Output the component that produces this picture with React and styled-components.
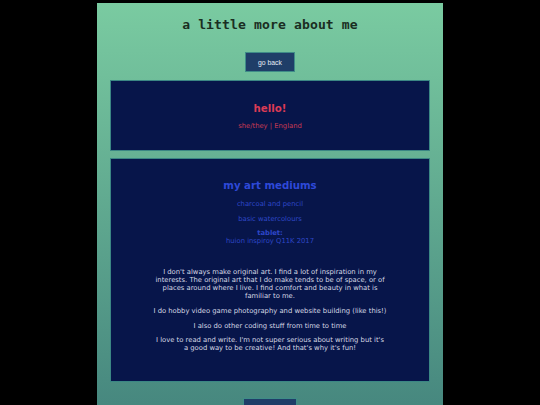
import React from 'react';
import styled, { createGlobalStyle } from 'styled-components';

const GlobalStyle = createGlobalStyle`
  html, body {
    margin: 0;
    padding: 0;
    background: #000;
  }
  body {
    font-family: 'DejaVu Sans', Verdana, sans-serif;
    font-size: 6.8px;
  }
`;

const Column = styled.main`
  width: 346px;
  margin: 3px auto 0;
  padding: 14px 0 30px;
  background: linear-gradient(180deg, #7acba1 0px, #47887f 400px);
  text-align: center;
`;

const Title = styled.h1`
  margin: 0;
  font-family: 'DejaVu Sans Mono', 'Liberation Mono', monospace;
  font-size: 13.1px;
  font-weight: bold;
  color: #1a2e22;
  letter-spacing: 0.1px;
`;

const NavButton = styled.button`
  display: block;
  margin: ${(p) => p.$top}px auto 0;
  padding: 5.5px 12px;
  font-family: 'Liberation Sans', Arial, sans-serif;
  font-size: 6.8px;
  color: #e6edf5;
  background: #1f3e68;
  border: 1px solid #3f8c88;
`;

const Card = styled.section`
  margin: ${(p) => p.$top}px 13px 0;
  padding: 13px 0;
  background: #07154a;
  border: 1px solid #3b8684;
`;

const Heading = styled.h2`
  margin: 8.5px 0;
  font-size: 10.2px;
  font-weight: bold;
  color: ${(p) => p.$color};
`;

const Line = styled.p`
  margin: 6.8px 0;
  color: ${(p) => p.$color};
`;

const Notes = styled.div`
  padding: 9px 42px;
  color: #d6d9e4;
`;

export default function App() {
  return (
    <>
      <GlobalStyle />
      <Column>
        <Title>a little more about me</Title>
        <NavButton $top={20}>go back</NavButton>

        <Card $top={8}>
          <Heading $color="#dc3b55">hello!</Heading>
          <Line $color="#c93a52">she/they | England</Line>
        </Card>

        <Card $top={7}>
          <Heading $color="#2e49d8">my art mediums</Heading>
          <Line $color="#2e47c8">charcoal and pencil</Line>
          <Line $color="#2e47c8">basic watercolours</Line>
          <Line $color="#2e47c8">
            <b>tablet:</b>
            <br />
            huion inspiroy Q11K 2017
          </Line>
          <Notes>
            <Line>
              I don't always make original art. I find a lot of inspiration in
              my interests. The original art that I do make tends to be of
              space, or of places around where I live. I find comfort and
              beauty in what is familiar to me.
            </Line>
            <Line>
              I do hobby video game photography and website building (like
              this!)
            </Line>
            <Line>I also do other coding stuff from time to time</Line>
            <Line>
              I love to read and write. I'm not super serious about writing but
              it's a good way to be creative! And that's why it's fun!
            </Line>
          </Notes>
        </Card>

        <NavButton $top={16}>collection</NavButton>
      </Column>
    </>
  );
}
